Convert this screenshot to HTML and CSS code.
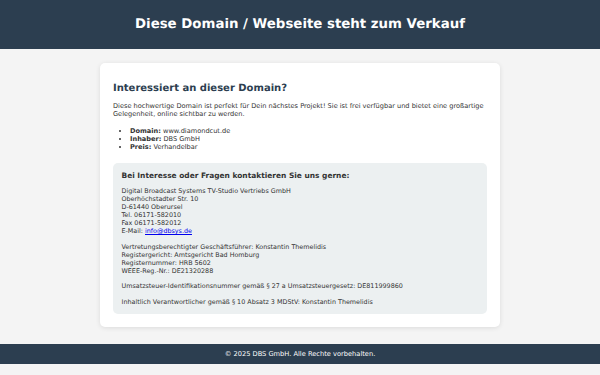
FILE: index.html
```html
<!DOCTYPE html>
<html lang="de">
<head>
  <meta charset="UTF-8">
  <meta name="viewport" content="width=device-width, initial-scale=1.0">
  <title>Domain zu verkaufen</title>
  <link rel="stylesheet" href="styles.css">
</head>
<body>
  <header class="site-header">
    <h1>Diese Domain / Webseite steht zum Verkauf</h1>
  </header>

  <main class="container">
    <h2>Interessiert an dieser Domain?</h2>
    <p>Diese hochwertige Domain ist perfekt für Dein nächstes Projekt! Sie ist frei verfügbar und bietet eine großartige Gelegenheit, online sichtbar zu werden.</p>
    <ul class="facts">
      <li><strong>Domain:</strong> www.diamondcut.de</li>
      <li><strong>Inhaber:</strong> DBS GmbH</li>
      <li><strong>Preis:</strong> Verhandelbar</li>
    </ul>

    <div class="contact">
      <h3>Bei Interesse oder Fragen kontaktieren Sie uns gerne:</h3>
      <p>
        Digital Broadcast Systems TV-Studio Vertriebs GmbH<br>
        Oberhöchstadter Str. 10<br>
        D-61440 Oberursel<br>
        Tel. 06171-582010<br>
        Fax 06171-582012<br>
        E-Mail: <a href="mailto:info@dbsys.de">info@dbsys.de</a>
      </p>
      <p>
        Vertretungsberechtigter Geschäftsführer: Konstantin Themelidis<br>
        Registergericht: Amtsgericht Bad Homburg<br>
        Registernummer: HRB 5602<br>
        WEEE-Reg.-Nr.: DE21320288
      </p>
      <p>Umsatzsteuer-Identifikationsnummer gemäß § 27 a Umsatzsteuergesetz: DE811999860</p>
      <p>Inhaltlich Verantwortlicher gemäß § 10 Absatz 3 MDStV: Konstantin Themelidis</p>
    </div>
  </main>

  <footer class="site-footer">
    &copy; 2025 DBS GmbH. Alle Rechte vorbehalten.
  </footer>
</body>
</html>
```

FILE: styles.css
```css
body {
  margin: 0;
  font-family: "DejaVu Sans", sans-serif;
  text-rendering: geometricPrecision;
  background-color: #f4f4f4;
  color: #333;
  min-height: 375px;
}
.site-header {
  background-color: #2c3e50;
  color: #fff;
  height: 49px;
  display: flex;
  align-items: center;
  justify-content: center;
}
.site-header h1 {
  margin: 0;
  font-size: 13.33px;
}
.container {
  width: 374px;
  margin: 14px auto 17px;
  padding: 13px;
  background-color: #fff;
  border-radius: 5px;
  box-shadow: 0 1px 5px rgba(0, 0, 0, 0.1);
}
.container h2 {
  margin: 7px 0 7px;
  font-size: 10px;
  line-height: 12px;
  color: #2c3e50;
}
.container p {
  margin: 0 0 9px;
  font-size: 6.6px;
  line-height: 8px;
}
.facts {
  margin: 0 0 11.5px;
  padding-left: 17px;
  font-size: 6.6px;
  line-height: 8px;
}
.contact {
  background-color: #ecf0f1;
  border-radius: 5px;
  padding: 8px 8.5px;
}
.contact h3 {
  margin: 0 0 7.5px;
  font-size: 7.45px;
  line-height: 9px;
}
.contact p {
  font-size: 6.4px;
  margin-bottom: 7.7px;
}
.contact p:last-child {
  margin-bottom: 0;
}
.contact a {
  color: #0000ee;
}
.site-footer {
  background-color: #2c3e50;
  color: #fff;
  text-align: center;
  font-size: 6.67px;
  height: 20px;
  line-height: 20px;
}
```
